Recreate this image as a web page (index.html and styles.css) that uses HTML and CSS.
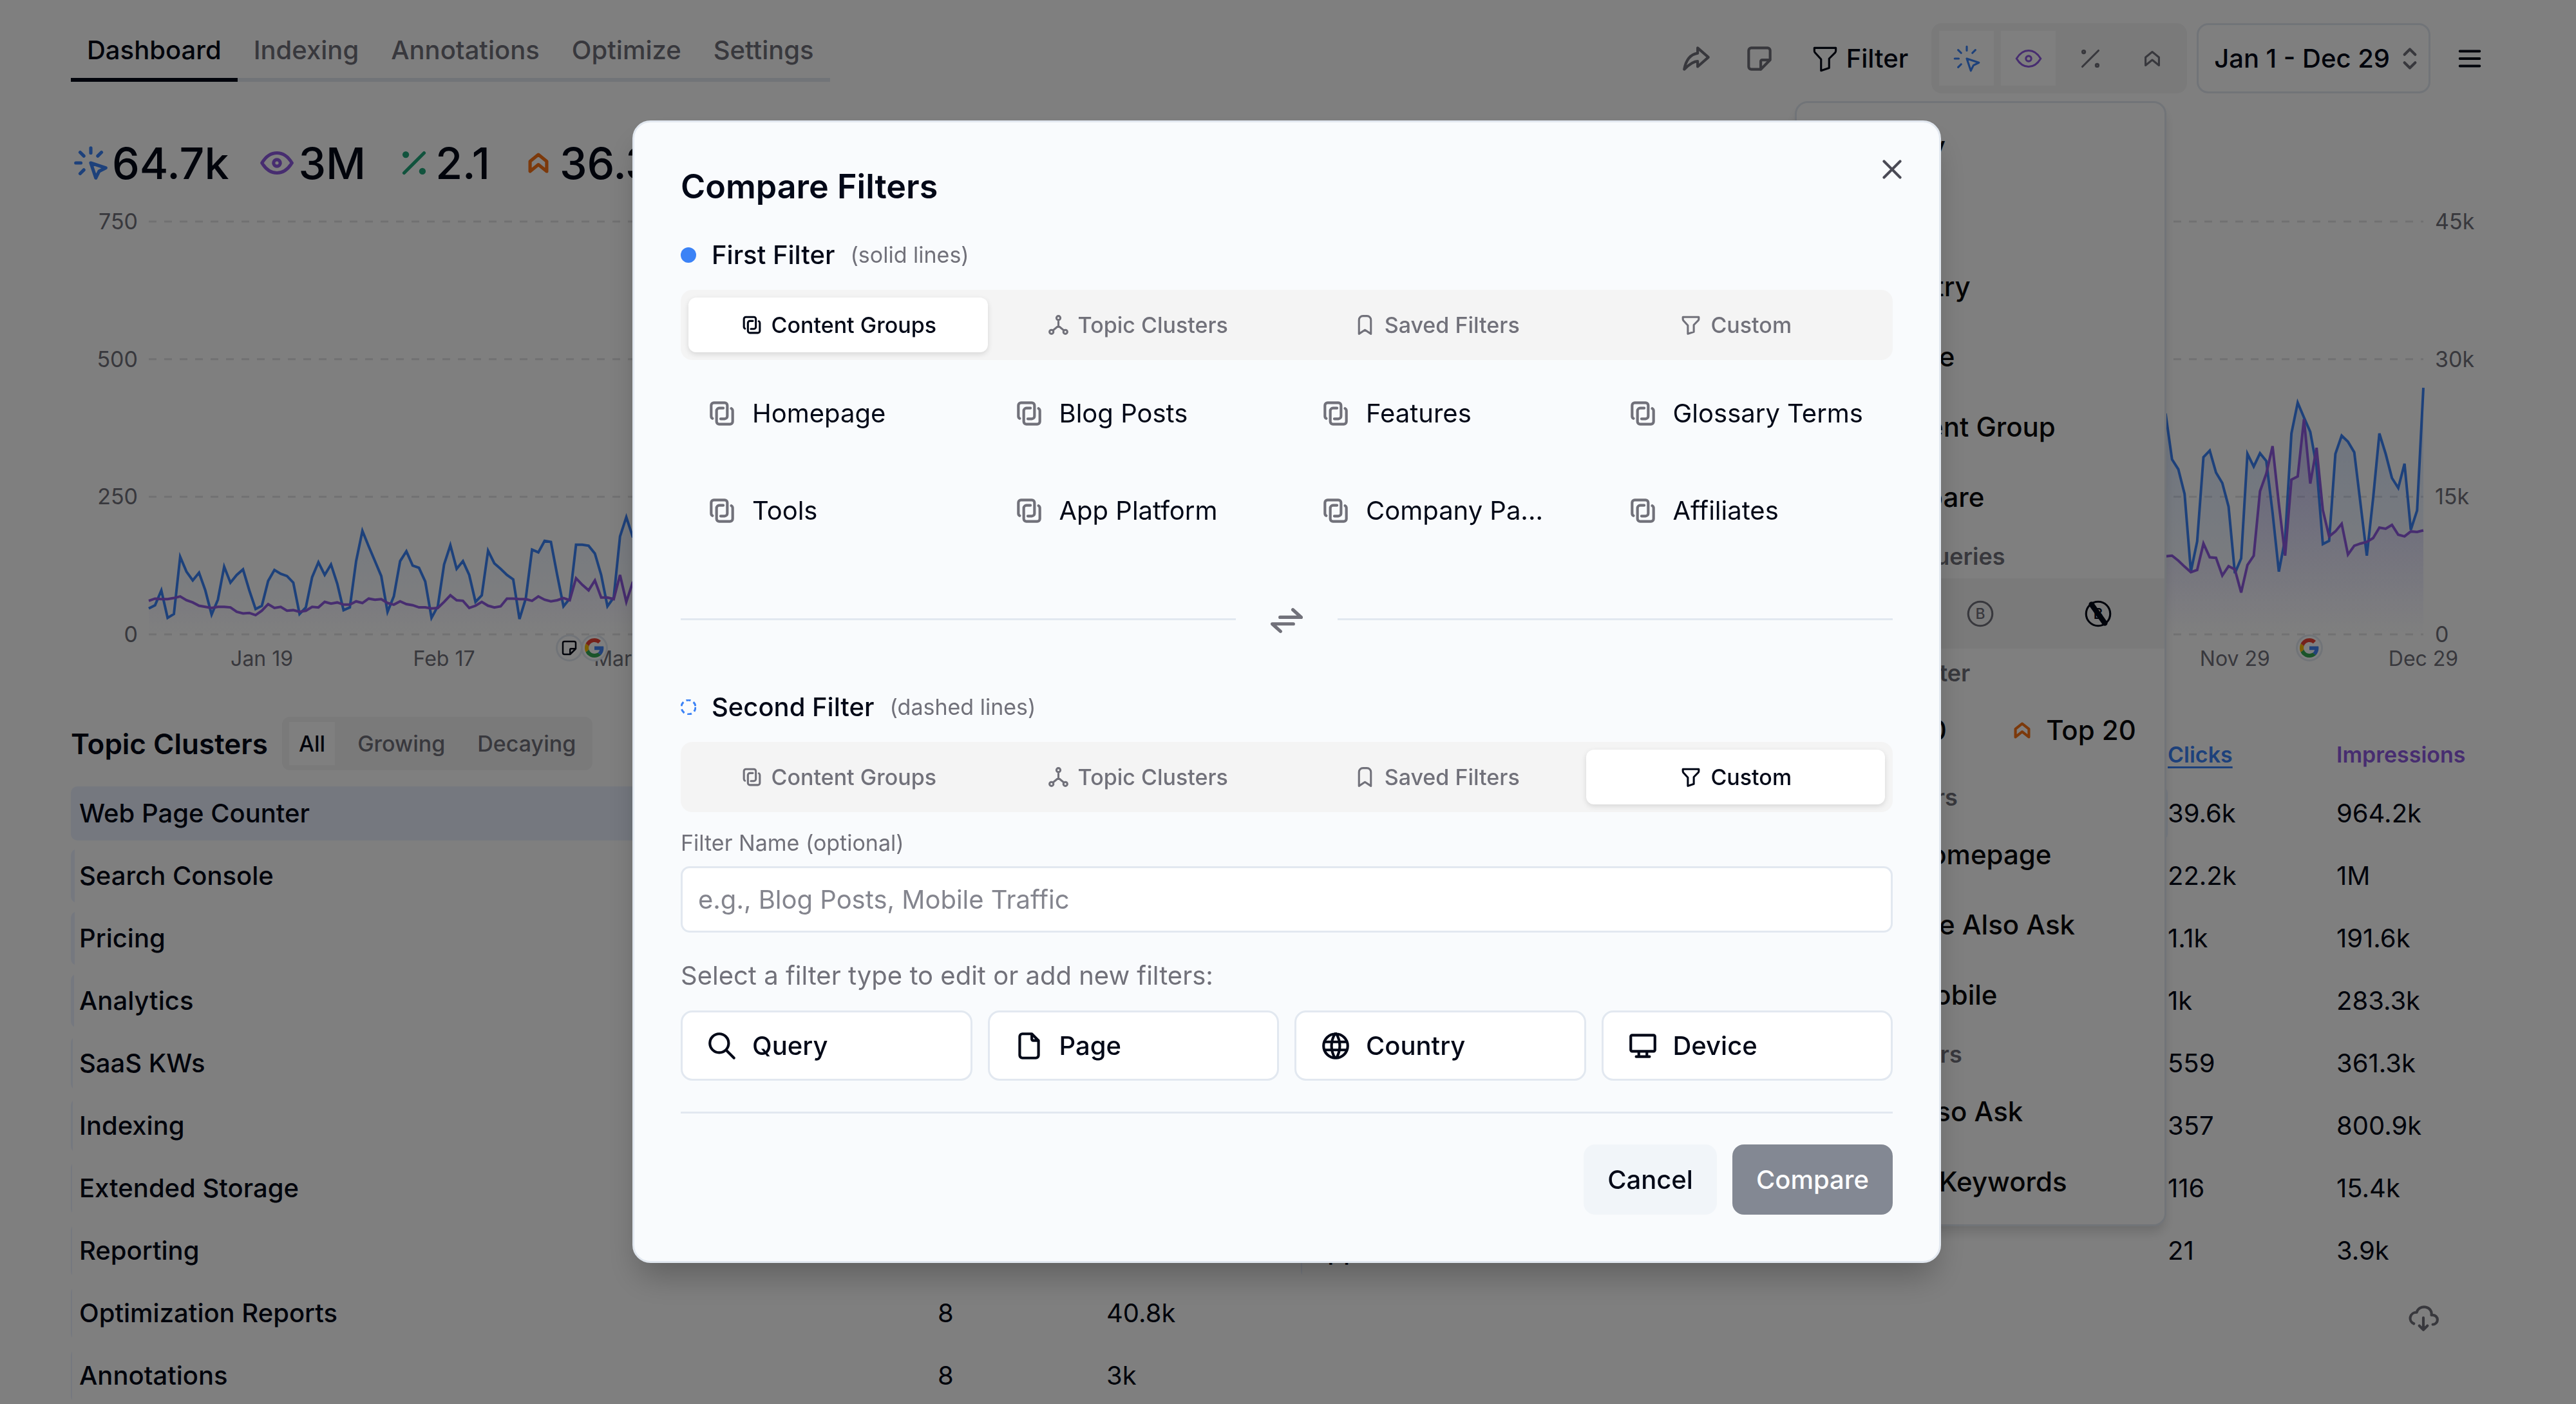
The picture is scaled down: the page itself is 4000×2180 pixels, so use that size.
FILE: index.html
```html
<!DOCTYPE html>
<html lang="en">

<head>
    <meta charset="UTF-8">
    <meta name="viewport" content="width=device-width, initial-scale=1.0">
    <title>Dashboard</title>
    <link rel="stylesheet" href="styles.css">
</head>

<body>
    <!-- icon sprite -->
    <svg class="sprite" aria-hidden="true">
        <symbol id="i-click" viewBox="0 0 24 24"><path d="M3 12h3M12 3v3M7.8 7.8L5.6 5.6M16.2 7.8l2.2-2.2M7.8 16.2l-2.2 2.2M12 12l9 3l-4 2l-2 4z"/></symbol>
        <symbol id="i-eye" viewBox="0 0 24 24"><path d="M10 12a2 2 0 1 0 4 0a2 2 0 0 0-4 0M21 12c-2.4 4-5.4 6-9 6s-6.6-2-9-6c2.4-4 5.4-6 9-6s6.6 2 9 6"/></symbol>
        <symbol id="i-percent" viewBox="0 0 24 24"><path d="M16 17a1 1 0 1 0 2 0a1 1 0 1 0-2 0M6 7a1 1 0 1 0 2 0a1 1 0 1 0-2 0M6 18L18 6"/></symbol>
        <symbol id="i-rank" viewBox="0 0 24 24"><path d="M17 11v6l-5-4l-5 4v-6l5-4z"/></symbol>
        <symbol id="i-share" viewBox="0 0 24 24"><path d="M13 4v4c-6.575 1.028-9.02 6.788-10 12c-.037.206 5.384-5.962 10-6v4l8-7z"/></symbol>
        <symbol id="i-note" viewBox="0 0 24 24"><path d="M13 20l7-7M13 20v-6a1 1 0 0 1 1-1h6V6a2 2 0 0 0-2-2H6a2 2 0 0 0-2 2v12a2 2 0 0 0 2 2h7"/></symbol>
        <symbol id="i-filter" viewBox="0 0 24 24"><path d="M4 4h16v2.172a2 2 0 0 1-.586 1.414L15 12v7l-6 2v-8.500L4.520 7.572A2 2 0 0 1 4 6.227z"/></symbol>
        <symbol id="i-selector" viewBox="0 0 24 24"><path d="M8 9l4-4l4 4M16 15l-4 4l-4-4"/></symbol>
        <symbol id="i-menu" viewBox="0 0 24 24"><path d="M4 6h16M4 12h16M4 18h16"/></symbol>
        <symbol id="i-group" viewBox="0 0 24 24"><path d="M19 8.268a2 2 0 0 1 1 1.732v8a2 2 0 0 1-2 2h-8a2 2 0 0 1-2-2v-8a2 2 0 0 1 2-2h3M5 15.734A2 2 0 0 1 4 14V6a2 2 0 0 1 2-2h8a2 2 0 0 1 2 2v8a2 2 0 0 1-2 2h-3"/></symbol>
        <symbol id="i-cluster" viewBox="0 0 24 24"><path d="M10 5a2 2 0 1 0 4 0a2 2 0 1 0-4 0M3 19a2 2 0 1 0 4 0a2 2 0 1 0-4 0M17 19a2 2 0 1 0 4 0a2 2 0 1 0-4 0M6.500 17.500L12 13l5.500 4.500M12 7v6"/></symbol>
        <symbol id="i-bookmark" viewBox="0 0 24 24"><path d="M18 7v14l-6-4l-6 4V7a4 4 0 0 1 4-4h4a4 4 0 0 1 4 4z"/></symbol>
        <symbol id="i-close" viewBox="0 0 24 24"><path d="M18 6L6 18M6 6l12 12"/></symbol>
        <symbol id="i-swap" viewBox="0 0 24 24"><path d="M8 11h12.700l-5-4.500M16 15H3.300l5 4.500"/></symbol>
        <symbol id="i-search" viewBox="0 0 24 24"><path d="M3 10a7 7 0 1 0 14 0a7 7 0 1 0-14 0M21 21l-6-6"/></symbol>
        <symbol id="i-file" viewBox="0 0 24 24"><path d="M14 3v4a1 1 0 0 0 1 1h4M17 21H7a2 2 0 0 1-2-2V5a2 2 0 0 1 2-2h7l5 5v11a2 2 0 0 1-2 2z"/></symbol>
        <symbol id="i-globe" viewBox="0 0 24 24"><path d="M3 12a9 9 0 1 0 18 0a9 9 0 0 0-18 0M3.600 9h16.800M3.600 15h16.800M11.500 3a17 17 0 0 0 0 18M12.500 3a17 17 0 0 1 0 18"/></symbol>
        <symbol id="i-device" viewBox="0 0 24 24"><path d="M3 5a1 1 0 0 1 1-1h16a1 1 0 0 1 1 1v10a1 1 0 0 1-1 1H4a1 1 0 0 1-1-1zM7 20h10M9 16v4M15 16v4"/></symbol>
        <symbol id="i-cloud" viewBox="0 0 24 24"><path d="M19 18a3.500 3.500 0 0 0 0-7h-1A5 4.500 0 0 0 7 9a4.600 4.400 0 0 0-2.100 8.400M12 13v9M9 19l3 3l3-3"/></symbol>
        <symbol id="i-google" viewBox="0 0 48 48">
            <path fill="#ea4335" stroke="none" d="M24 9.500c3.540 0 6.710 1.220 9.210 3.600l6.850-6.850C35.900 2.380 30.470 0 24 0 14.620 0 6.510 5.380 2.560 13.220l7.980 6.190C12.430 13.720 17.740 9.500 24 9.500z"/>
            <path fill="#4285f4" stroke="none" d="M46.980 24.550c0-1.570-.15-3.090-.38-4.550H24v9.020h12.940c-.58 2.960-2.260 5.480-4.780 7.180l7.730 6c4.510-4.180 7.090-10.360 7.090-17.650z"/>
            <path fill="#fbbc05" stroke="none" d="M10.530 28.590c-.48-1.450-.76-2.990-.76-4.590s.27-3.140.76-4.590l-7.980-6.190C.92 16.460 0 20.120 0 24c0 3.880.92 7.540 2.560 10.780l7.970-6.190z"/>
            <path fill="#34a853" stroke="none" d="M24 48c6.480 0 11.930-2.130 15.890-5.810l-7.730-6c-2.150 1.450-4.920 2.300-8.160 2.300-6.260 0-11.570-4.220-13.470-9.910l-7.980 6.190C6.510 42.620 14.620 48 24 48z"/>
        </symbol>
    </svg>

    <div class="page">
        <header class="header">
            <nav class="nav">
                <a href="#" class="active">Dashboard</a>
                <a href="#">Indexing</a>
                <a href="#">Annotations</a>
                <a href="#">Optimize</a>
                <a href="#">Settings</a>
            </nav>
            <div class="controls">
                <button class="icon-button" aria-label="Share"><svg class="icon"><use href="#i-share"/></svg></button>
                <button class="icon-button" aria-label="Notes"><svg class="icon"><use href="#i-note"/></svg></button>
                <div class="filter">
                    <button class="filter-button"><svg class="icon"><use href="#i-filter"/></svg>Filter</button>
                    <div class="menu">
                        <button class="menu-item"><svg class="icon"><use href="#i-search"/></svg>Query</button>
                        <button class="menu-item"><svg class="icon"><use href="#i-file"/></svg>Page</button>
                        <button class="menu-item"><svg class="icon"><use href="#i-globe"/></svg>Country</button>
                        <button class="menu-item"><svg class="icon"><use href="#i-device"/></svg>Device</button>
                        <button class="menu-item"><svg class="icon"><use href="#i-group"/></svg>Content Group</button>
                        <button class="menu-item"><svg class="icon"><use href="#i-swap"/></svg>Compare</button>
                        <div class="menu-label">Branded Queries</div>
                        <div class="brand-switch">
                            <button>All</button>
                            <button aria-label="Branded">
                                <svg class="icon" viewBox="0 0 24 24"><circle cx="12" cy="12" r="9"/><text x="12" y="16">B</text></svg>
                            </button>
                            <button class="active" aria-label="Not branded">
                                <svg class="icon" viewBox="0 0 24 24"><circle cx="12" cy="12" r="9"/><text x="12" y="16">B</text><path class="slash" d="M7 5l10 14"/></svg>
                            </button>
                        </div>
                        <div class="menu-label">Position Filter</div>
                        <div class="menu-pair">
                            <button class="menu-item"><svg class="icon orange"><use href="#i-rank"/></svg>Top 10</button>
                            <button class="menu-item"><svg class="icon orange"><use href="#i-rank"/></svg>Top 20</button>
                        </div>
                        <div class="menu-label spaced">Quick Filters</div>
                        <button class="menu-item"><svg class="icon"><use href="#i-filter"/></svg>No Homepage</button>
                        <button class="menu-item"><svg class="icon"><use href="#i-filter"/></svg>People Also Ask</button>
                        <button class="menu-item"><svg class="icon"><use href="#i-filter"/></svg>No Mobile</button>
                        <div class="menu-label">Saved Filters</div>
                        <button class="menu-item"><svg class="icon"><use href="#i-bookmark"/></svg>No Also Ask</button>
                        <button class="menu-item"><svg class="icon"><use href="#i-bookmark"/></svg>SaaS Keywords</button>
                    </div>
                </div>
                <div class="metrics">
                    <button class="blue active" aria-label="Clicks"><svg class="icon"><use href="#i-click"/></svg></button>
                    <button class="purple active" aria-label="Impressions"><svg class="icon"><use href="#i-eye"/></svg></button>
                    <button aria-label="CTR"><svg class="icon"><use href="#i-percent"/></svg></button>
                    <button aria-label="Position"><svg class="icon"><use href="#i-rank"/></svg></button>
                </div>
                <button class="date-button">Jan 1 - Dec 29<svg class="icon"><use href="#i-selector"/></svg></button>
                <button class="burger" aria-label="Menu"><svg class="icon"><use href="#i-menu"/></svg></button>
            </div>
        </header>

        <div class="stats">
            <div class="stat"><svg class="icon blue"><use href="#i-click"/></svg>64.7k</div>
            <div class="stat"><svg class="icon purple"><use href="#i-eye"/></svg>3M</div>
            <div class="stat"><svg class="icon green"><use href="#i-percent"/></svg>2.1</div>
            <div class="stat"><svg class="icon orange"><use href="#i-rank"/></svg>36.3</div>
        </div>

        <div class="chart">
            <div class="axis-y left"><span>750</span><span>500</span><span>250</span><span>0</span></div>
            <div class="plot">
                <svg viewBox="0 0 362 750" preserveAspectRatio="none">
                    <defs>
                        <linearGradient id="fill-clicks" x1="0" y1="0" x2="0" y2="1">
                            <stop offset="0" stop-color="#3b82f6" stop-opacity="0.2"/>
                            <stop offset="1" stop-color="#3b82f6" stop-opacity="0"/>
                        </linearGradient>
                        <linearGradient id="fill-impressions" x1="0" y1="0" x2="0" y2="1">
                            <stop offset="0" stop-color="#8f5ae0" stop-opacity="0.25"/>
                            <stop offset="1" stop-color="#8f5ae0" stop-opacity="0"/>
                        </linearGradient>
                    </defs>
                    <path class="grid" d="M0 0H362M0 250H362M0 500H362M0 750H362"/>
                    <path id="area-clicks" fill="url(#fill-clicks)"/>
                    <path id="area-impressions" fill="url(#fill-impressions)"/>
                    <path id="line-clicks" class="line blue"/>
                    <path id="line-impressions" class="line purple"/>
                </svg>
                <span class="marker" style="left: 18.5%"><svg class="icon"><use href="#i-note"/></svg></span>
                <span class="marker" style="left: 19.6%"><svg class="icon"><use href="#i-google"/></svg></span>
                <span class="marker" style="left: 95%"><svg class="icon"><use href="#i-google"/></svg></span>
            </div>
            <div class="axis-y right"><span>45k</span><span>30k</span><span>15k</span><span>0</span></div>
            <div class="axis-x"><span>Jan 19</span><span>Feb 17</span><span>Mar 18</span><span>Nov 29</span><span>Dec 29</span></div>
        </div>

        <div class="tables">
            <table>
                <thead>
                    <tr>
                        <th>
                            <div class="table-head">
                                <h2>Topic Clusters</h2>
                                <div class="trend">
                                    <button class="active">All</button>
                                    <button>Growing</button>
                                    <button>Decaying</button>
                                </div>
                            </div>
                        </th>
                        <th class="num blue"><u>Clicks</u></th>
                        <th class="num purple">Impressions</th>
                    </tr>
                </thead>
                <tbody>
                    <tr><td style="--share: 100%">Web Page Counter</td><td>38.9k</td><td>1.1M</td></tr>
                    <tr><td style="--share: 6px">Search Console</td><td>162</td><td>96k</td></tr>
                    <tr><td style="--share: 6px">Pricing</td><td>154</td><td>21k</td></tr>
                    <tr><td style="--share: 5px">Analytics</td><td>120</td><td>58k</td></tr>
                    <tr><td style="--share: 3px">SaaS KWs</td><td>74</td><td>49k</td></tr>
                    <tr><td style="--share: 3px">Indexing</td><td>61</td><td>33k</td></tr>
                    <tr><td style="--share: 2px">Extended Storage</td><td>27</td><td>12k</td></tr>
                    <tr><td style="--share: 2px">Reporting</td><td>14</td><td>18k</td></tr>
                    <tr><td style="--share: 2px">Optimization Reports</td><td>8</td><td>40.8k</td></tr>
                    <tr><td style="--share: 2px">Annotations</td><td>8</td><td>3k</td></tr>
                </tbody>
            </table>
            <div class="table-box">
                <table>
                    <thead>
                        <tr>
                            <th><div class="table-head"><h2>Content Groups</h2></div></th>
                            <th class="num blue"><u>Clicks</u></th>
                            <th class="num purple">Impressions</th>
                        </tr>
                    </thead>
                    <tbody>
                        <tr><td style="--share: 100%">Homepage</td><td>39.6k</td><td>964.2k</td></tr>
                        <tr><td style="--share: 56%">Blog Posts</td><td>22.2k</td><td>1M</td></tr>
                        <tr><td style="--share: 3%">Features</td><td>1.1k</td><td>191.6k</td></tr>
                        <tr><td style="--share: 3%">Glossary Terms</td><td>1k</td><td>283.3k</td></tr>
                        <tr><td style="--share: 2%">Tools</td><td>559</td><td>361.3k</td></tr>
                        <tr><td style="--share: 1%">Affiliates</td><td>357</td><td>800.9k</td></tr>
                        <tr><td style="--share: 6px">Company Pages</td><td>116</td><td>15.4k</td></tr>
                        <tr><td style="--share: 2px">App Platform</td><td>21</td><td>3.9k</td></tr>
                    </tbody>
                </table>
                <button class="download" aria-label="Download"><svg class="icon"><use href="#i-cloud"/></svg></button>
            </div>
        </div>
    </div>

    <div class="overlay">
        <div class="modal" role="dialog" aria-modal="true" aria-labelledby="modal-title">
            <button class="close" aria-label="Close"><svg class="icon"><use href="#i-close"/></svg></button>
            <h1 id="modal-title">Compare Filters</h1>

            <section>
                <div class="filter-head"><span class="dot"></span><h3>First Filter</h3><small>(solid lines)</small></div>
                <div class="tabs">
                    <button class="active"><svg class="icon"><use href="#i-group"/></svg>Content Groups</button>
                    <button><svg class="icon"><use href="#i-cluster"/></svg>Topic Clusters</button>
                    <button><svg class="icon"><use href="#i-bookmark"/></svg>Saved Filters</button>
                    <button><svg class="icon"><use href="#i-filter"/></svg>Custom</button>
                </div>
                <div class="groups">
                    <button class="choice"><svg class="icon"><use href="#i-group"/></svg><span>Homepage</span></button>
                    <button class="choice"><svg class="icon"><use href="#i-group"/></svg><span>Blog Posts</span></button>
                    <button class="choice"><svg class="icon"><use href="#i-group"/></svg><span>Features</span></button>
                    <button class="choice"><svg class="icon"><use href="#i-group"/></svg><span>Glossary Terms</span></button>
                    <button class="choice"><svg class="icon"><use href="#i-group"/></svg><span>Tools</span></button>
                    <button class="choice"><svg class="icon"><use href="#i-group"/></svg><span>App Platform</span></button>
                    <button class="choice"><svg class="icon"><use href="#i-group"/></svg><span>Company Pa...</span></button>
                    <button class="choice"><svg class="icon"><use href="#i-group"/></svg><span>Affiliates</span></button>
                </div>
            </section>

            <div class="swap"><button aria-label="Swap filters"><svg class="icon"><use href="#i-swap"/></svg></button></div>

            <section>
                <div class="filter-head">
                    <svg class="dot-dashed" viewBox="0 0 24 24"><circle cx="12" cy="12" r="11"/></svg>
                    <h3>Second Filter</h3><small>(dashed lines)</small>
                </div>
                <div class="tabs">
                    <button><svg class="icon"><use href="#i-group"/></svg>Content Groups</button>
                    <button><svg class="icon"><use href="#i-cluster"/></svg>Topic Clusters</button>
                    <button><svg class="icon"><use href="#i-bookmark"/></svg>Saved Filters</button>
                    <button class="active"><svg class="icon"><use href="#i-filter"/></svg>Custom</button>
                </div>
                <label for="filter-name">Filter Name (optional)</label>
                <input id="filter-name" type="text" placeholder="e.g., Blog Posts, Mobile Traffic">
                <p>Select a filter type to edit or add new filters:</p>
                <div class="types">
                    <button class="choice"><svg class="icon"><use href="#i-search"/></svg>Query</button>
                    <button class="choice"><svg class="icon"><use href="#i-file"/></svg>Page</button>
                    <button class="choice"><svg class="icon"><use href="#i-globe"/></svg>Country</button>
                    <button class="choice"><svg class="icon"><use href="#i-device"/></svg>Device</button>
                </div>
            </section>

            <div class="actions">
                <button class="cancel">Cancel</button>
                <button class="compare" disabled>Compare</button>
            </div>
        </div>
    </div>

    <script src="chart.js"></script>
</body>

</html>
```

FILE: styles.css
```css
* {
    box-sizing: border-box;
}

body {
    margin: 0;
    height: 100vh;
    overflow: hidden;
    background: #fff;
    color: #020817;
    font-family: Inter, "Liberation Sans", sans-serif;
    font-size: 40px;
    line-height: 60px;
}

h1, h2, h3, p {
    margin: 0;
}

button {
    margin: 0;
    padding: 0;
    border: 0;
    background: none;
    color: inherit;
    font: inherit;
}

.sprite {
    display: none;
}

.icon {
    width: 50px;
    height: 50px;
    flex: none;
    fill: none;
    stroke: currentColor;
    stroke-width: 2;
    stroke-linecap: round;
    stroke-linejoin: round;
}

.blue { color: #3b82f6; }
.purple { color: #8f5ae0; }
.green { color: #22a67a; }
.orange { color: #f97316; }

.page {
    padding: 36px 110px 0;
}

/* header */

.header {
    display: flex;
    justify-content: space-between;
    align-items: flex-start;
}

.nav {
    display: flex;
}

.nav a {
    padding: 12px 25px 13px;
    border-bottom: 6px solid #e2e8f0;
    color: #71717a;
    font-weight: 500;
    text-decoration: none;
}

.nav a.active {
    border-color: #020817;
    color: #020817;
}

.controls {
    display: flex;
    align-items: center;
    height: 109px;
}

.icon-button {
    display: flex;
    justify-content: center;
    width: 98px;
    color: #71717a;
}

.filter {
    position: relative;
    margin: 0 8px 0 6px;
}

.filter-button {
    display: flex;
    align-items: center;
    gap: 8px;
    height: 109px;
    padding: 0 28px 0 22px;
    font-weight: 500;
}

.filter-button .icon {
    stroke-width: 1.5;
}

.metrics {
    display: flex;
    gap: 11px;
    margin-right: 15px;
    padding: 12px;
    border-radius: 16px;
    background: #f4f4f5;
}

.metrics button {
    display: flex;
    align-items: center;
    justify-content: center;
    width: 85px;
    height: 85px;
}

.metrics .icon {
    stroke-width: 1.5;
}

.metrics button:not(.active) {
    color: #71717a;
}

.metrics .active {
    background: #fff;
}

.date-button {
    display: flex;
    align-items: center;
    gap: 6px;
    height: 109px;
    padding: 0 4px 0 24px;
    border: 3px solid #e2e8f0;
    border-radius: 18px;
    font-weight: 500;
}

.date-button .icon {
    color: #71717a;
}

.burger {
    display: flex;
    justify-content: center;
    width: 110px;
    margin-left: 6px;
}

.burger .icon {
    width: 46px;
}

/* filter menu */

.menu {
    position: absolute;
    top: 121px;
    left: 0;
    z-index: 1;
    width: 577px;
    padding: 12px 0;
    border: 3px solid #e2e8f0;
    border-radius: 20px;
    background: #fff;
    box-shadow: 0 12px 18px -3px rgba(0, 0, 0, 0.15);
    color: #09090b;
    font-size: 42px;
    font-weight: 500;
}

.menu-item {
    display: flex;
    align-items: center;
    gap: 14px;
    width: 100%;
    height: 109px;
    padding-left: 44px;
    white-space: nowrap;
}

.menu-pair {
    display: grid;
    grid-template-columns: 1fr 1fr;
}

.menu-pair .menu-item {
    gap: 12px;
    padding-left: 40px;
}

.menu-label {
    padding: 8px 32px 4px;
    color: #71717a;
    font-size: 36px;
    font-weight: 600;
}

.menu-label.spaced {
    padding-top: 20px;
}

.brand-switch {
    display: grid;
    grid-template-columns: repeat(3, 1fr);
    height: 109px;
    padding: 0 11px;
    background: #f4f4f5;
    color: #71717a;
}

.brand-switch button {
    display: flex;
    align-items: center;
    justify-content: center;
}

.brand-switch .active {
    color: #020817;
}

.brand-switch .icon {
    stroke-width: 1.5;
}

.brand-switch text {
    fill: currentColor;
    stroke: none;
    font-size: 11px;
    text-anchor: middle;
}

.brand-switch .slash {
    stroke-width: 4;
}

/* totals */

.stats {
    display: flex;
    gap: 44px;
    margin-top: 68px;
    font-size: 68px;
    font-weight: 500;
    line-height: 80px;
}

.stat {
    display: flex;
    align-items: center;
    gap: 2px;
}

.stat .icon {
    width: 62px;
    height: 62px;
}

/* chart */

.chart {
    display: grid;
    grid-template-columns: 121px 1fr 127px;
    grid-template-rows: 641px auto;
    margin-top: 51px;
    color: #71717a;
    font-size: 34px;
    line-height: 40px;
}

.axis-y {
    display: flex;
    flex-direction: column;
    justify-content: space-between;
}

.axis-y span {
    display: flex;
    align-items: center;
    height: 0;
}

.axis-y.left {
    align-items: flex-end;
    padding-right: 17px;
}

.axis-y.right {
    padding-left: 18px;
}

.plot {
    position: relative;
}

.plot > svg {
    display: block;
    width: 100%;
    height: 100%;
    overflow: visible;
}

.plot path {
    vector-effect: non-scaling-stroke;
}

.grid {
    stroke: #e2e2e4;
    stroke-width: 3px;
    stroke-dasharray: 12 12;
}

.line {
    fill: none;
    stroke: currentColor;
    stroke-width: 4px;
}

.marker {
    position: absolute;
    top: 100%;
    display: flex;
    align-items: center;
    justify-content: center;
    width: 42px;
    height: 42px;
    margin-left: -21px;
    border: 3px solid #e2e8f0;
    border-radius: 50%;
    background: #fff;
    color: #020817;
}

.marker .icon {
    width: 30px;
    height: 30px;
}

/* one column per stretch of days between two ticks */
.axis-x {
    grid-column: 2;
    display: grid;
    grid-template-columns: 18fr 29fr 29fr 256fr 30fr;
    justify-items: end;
    margin-top: 18px;
    font-size: 32px;
}

.axis-x span {
    display: flex;
    justify-content: center;
    width: 0;
    white-space: nowrap;
}

/* tables */

.tables {
    display: grid;
    grid-template-columns: 1fr 1fr;
    align-items: start;
    gap: 40px;
    margin-top: 57px;
}

table {
    width: 100%;
    table-layout: fixed;
    border-spacing: 0 13px;
}

th {
    height: 95px;
    padding: 0 0 12px;
    text-align: left;
    font-weight: 600;
}

.num {
    width: 262px;
    padding-top: 34px;
    font-size: 34px;
    line-height: 44px;
}

u {
    text-underline-offset: 6px;
}

.table-head {
    display: flex;
    align-items: center;
    gap: 22px;
}

h2 {
    font-size: 44px;
    font-weight: 600;
}

.trend {
    display: flex;
    gap: 20px;
    padding: 8px 11px;
    border-radius: 12px;
    background: #f4f4f5;
    color: #71717a;
    font-size: 34px;
    font-weight: 500;
}

.trend button {
    height: 67px;
    padding: 0 15px;
}

.trend .active {
    background: #fff;
    color: #020817;
}

td {
    height: 84px;
    padding: 0;
}

td:first-child {
    padding-left: 13px;
    border-radius: 10px;
    background: linear-gradient(#eaf1ff, #eaf1ff) left / var(--share) 100% no-repeat;
    font-weight: 500;
}

.download {
    display: flex;
    margin: 22px 102px 0 auto;
    color: #71717a;
}

/* dialog */

.overlay {
    position: fixed;
    inset: 0;
    z-index: 10;
    display: flex;
    justify-content: center;
    align-items: flex-start;
    padding: 187px 4px 0 0;
    background: rgba(0, 0, 0, 0.5);
}

.modal {
    position: relative;
    width: 100%;
    max-width: 2032px;
    padding: 72px;
    border: 3px solid #e2e8f0;
    border-radius: 28px;
    background: #f9fbfd;
    box-shadow: 0 30px 50px -10px rgba(0, 0, 0, 0.25);
}

.close {
    position: absolute;
    top: 48px;
    right: 48px;
    display: flex;
    color: #4a4a55;
}

h1 {
    font-size: 52px;
    font-weight: 600;
    line-height: 56px;
}

.filter-head {
    display: flex;
    align-items: center;
    gap: 24px;
    margin-bottom: 24px;
}

.modal h1 {
    margin-bottom: 48px;
}

h3 {
    font-size: 40px;
    font-weight: 500;
}

small {
    color: #71717a;
    font-size: 34px;
}

.dot {
    width: 24px;
    height: 24px;
    border-radius: 50%;
    background: #3b82f6;
}

.dot-dashed {
    width: 24px;
    height: 24px;
    fill: none;
    stroke: #3b82f6;
    stroke-width: 3;
    stroke-dasharray: 7 5;
}

.tabs {
    display: grid;
    grid-template-columns: repeat(4, 1fr);
    padding: 12px;
    border-radius: 18px;
    background: #f4f4f4;
    color: #71717a;
    font-size: 34px;
    font-weight: 500;
}

.tabs button {
    display: flex;
    align-items: center;
    justify-content: center;
    gap: 12px;
    height: 85px;
}

.tabs .icon {
    width: 37px;
    height: 37px;
}

.tabs .active {
    border-radius: 12px;
    background: #fff;
    box-shadow: 0 3px 8px rgba(0, 0, 0, 0.12);
    color: #020817;
}

.groups,
.types {
    display: grid;
    grid-template-columns: repeat(4, minmax(0, 1fr));
    gap: 42px 24px;
}

.groups {
    margin-top: 28px;
}

.choice {
    display: flex;
    align-items: center;
    gap: 22px;
    height: 109px;
    padding: 0 36px;
    border: 3px solid transparent;
    border-radius: 18px;
}

.groups .icon {
    color: #71717a;
}

.groups span {
    white-space: nowrap;
}

.types .choice {
    border-color: #e2e8f0;
    background: #fff;
    font-weight: 500;
}

.swap {
    display: flex;
    align-items: center;
    margin: 83px 0 76px;
}

.swap::before,
.swap::after {
    content: "";
    flex: 1;
    height: 3px;
    background: #e2e8f0;
}

.swap button {
    display: flex;
    justify-content: center;
    width: 158px;
    color: #71717a;
}

.swap .icon {
    width: 62px;
    height: 62px;
}

label {
    display: block;
    margin: 23px 0 11px;
    color: #71717a;
    font-size: 34px;
    line-height: 50px;
}

input {
    display: block;
    width: 100%;
    height: 103px;
    padding: 0 24px;
    border: 3px solid #e2e8f0;
    border-radius: 14px;
    background: #fff;
    color: inherit;
    font: inherit;
}

input::placeholder {
    color: #84858e;
}

p {
    margin: 37px 0 24px;
    color: #71717a;
}

.actions {
    display: flex;
    justify-content: flex-end;
    gap: 24px;
    margin-top: 48px;
    padding-top: 48px;
    border-top: 3px solid #e2e8f0;
}

.actions button {
    height: 109px;
    padding: 0 37px;
    border-radius: 18px;
    font-weight: 500;
}

.cancel {
    background: #f1f5f9;
}

.compare {
    background: #0f172a;
    color: #fff;
    opacity: 0.5;
}
```

FILE: chart.js
```js
// Daily values on the left axis, as [first day, values] runs
const series = {
    clicks: [
        [0, [47, 53, 80, 30, 37, 141, 114, 98, 112, 80, 36, 63, 123, 94, 108, 118, 80, 46, 52, 97,
            117, 110, 106, 94, 37, 49, 104, 131, 108, 127, 92, 44, 49, 133, 188, 160, 133, 106, 41, 69,
            133, 151, 125, 121, 96, 30, 51, 127, 162, 119, 133, 108, 59, 71, 152, 129, 119, 108, 100, 28,
            65, 154, 149, 170, 168, 108, 51, 65, 163, 163, 161, 147, 108, 51, 67, 178, 213, 178]],
        [321, [399, 318, 300, 255, 114, 169, 322, 334, 294, 275, 232, 111, 138, 328, 305, 329, 315, 221, 114, 174,
            365, 421, 394, 368, 305, 164, 170, 328, 361, 350, 331, 237, 143, 247, 365, 328, 284, 266, 310, 190,
            225, 448]],
    ],
    impressions: [
        [0, [61, 65, 64, 64, 66, 69, 62, 58, 52, 50, 48, 50, 50, 49, 41, 38, 39, 35, 43, 55,
            48, 50, 43, 44, 41, 43, 50, 49, 59, 56, 58, 54, 54, 60, 57, 65, 63, 64, 57, 54,
            60, 55, 53, 49, 49, 47, 48, 59, 71, 62, 61, 48, 52, 59, 52, 49, 51, 65, 65, 64,
            64, 61, 69, 63, 60, 62, 66, 62, 102, 90, 80, 98, 67, 67, 64, 108, 59, 94]],
        [321, [142, 143, 134, 123, 113, 117, 165, 140, 139, 107, 124, 118, 76, 126, 143, 260, 292, 342, 237, 143,
            281, 287, 391, 274, 339, 226, 178, 187, 201, 145, 161, 165, 168, 175, 194, 192, 199, 181, 178, 187,
            186, 189]],
    ],
};

for (const name in series) {
    const points = series[name].flatMap(([start, values]) =>
        values.map((value, i) => (start + i) + " " + (750 - value)));
    const line = "M" + points.join("L");
    document.getElementById("line-" + name).setAttribute("d", line);
    document.getElementById("area-" + name).setAttribute("d", line + "L362 750L0 750Z");
}
```
